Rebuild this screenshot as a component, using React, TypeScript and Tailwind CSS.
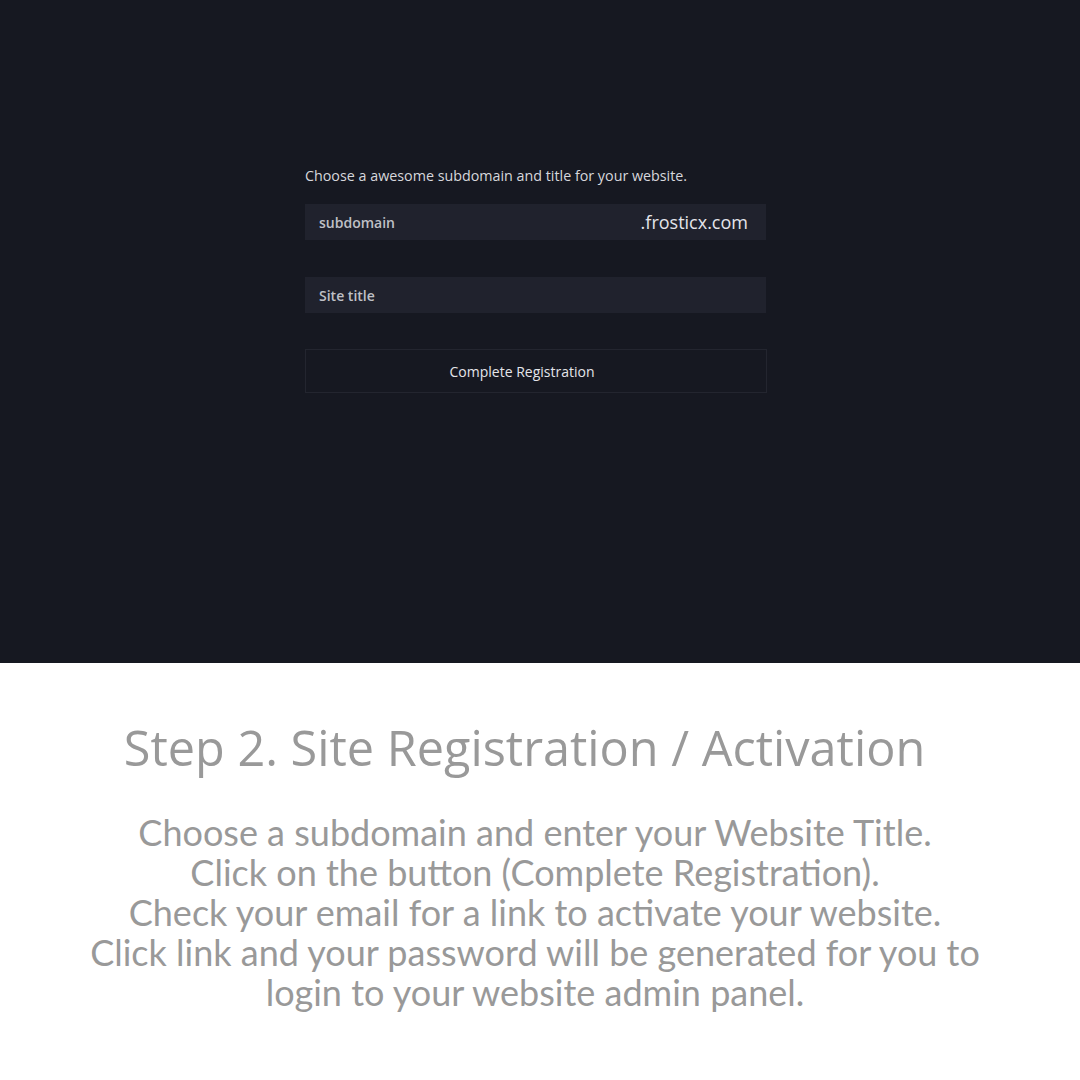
export default function App() {
  return (
    <div className="w-[1080px] h-[1080px] bg-white flex flex-col">
      <div className="h-[663px] bg-[#161821] flex flex-col items-start pl-[305px] pt-[166px]">
        <div className="w-[462px] flex flex-col" style={{ fontFamily: '"Open Sans", sans-serif' }}>
          <p className="text-[14.3px] leading-[20px] text-[#d6d7dc]">
            Choose a awesome subdomain and title for your website.
          </p>
          <div className="mt-[18px] h-[36px] w-[461px] bg-[#20222d] flex items-center justify-between pl-[14px] pr-[18px]">
            <span className="text-[14px] font-semibold text-[#bfc0c6]">subdomain</span>
            <span className="text-[18px] text-[#e4e5ea]">.frosticx.com</span>
          </div>
          <div className="mt-[37px] h-[36px] w-[461px] bg-[#20222d] flex items-center pl-[14px]">
            <span className="text-[14px] font-semibold text-[#bfc0c6]">Site title</span>
          </div>
          <button className="mt-[36px] h-[44px] w-[462px] border border-[#23252f] flex items-center justify-center pr-[28px] text-[14px] text-[#e4e5ea]">
            Complete Registration
          </button>
        </div>
      </div>
      <div className="flex flex-col items-center pt-[54px] text-[#999999]">
        <h1 className="text-[48.6px] leading-[60px] pr-[31px]" style={{ fontFamily: '"Open Sans", sans-serif' }}>
          Step 2. Site Registration / Activation
        </h1>
        <div className="mt-[35px] pr-[10px] text-center text-[36px] leading-[40px]" style={{ fontFamily: 'Lato, sans-serif' }}>
          <p>Choose a subdomain and enter your Website Title.</p>
          <p>Click on the button (Complete Registration).</p>
          <p>Check your email for a link to activate your website.</p>
          <p>Click link and your password will be generated for you to</p>
          <p>login to your website admin panel.</p>
        </div>
      </div>
    </div>
  );
}
